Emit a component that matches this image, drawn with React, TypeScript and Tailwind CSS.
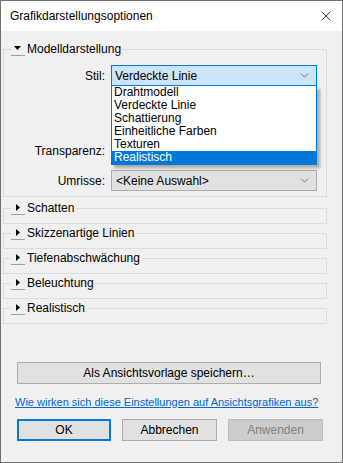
import { X, ChevronDown } from 'lucide-react';

const font = { fontFamily: '"Liberation Sans", Arial, sans-serif' };

const Tri = ({ open }: { open?: boolean }) => (
	<div className="w-[14px] h-[14px] flex items-center justify-center bg-[#f0f0f0] border-b border-[#a0a0a0]">
		{open ? (
			<svg width="8" height="5" viewBox="0 0 8 5">
				<path d="M0 0h7L3.5 4z" fill="#000" />
			</svg>
		) : (
			<svg width="5" height="8" viewBox="0 0 5 8">
				<path d="M0 0v7l4-3.5z" fill="#000" />
			</svg>
		)}
	</div>
);

const Section = ({ title }: { title: string }) => (
	<div className="relative h-[25px]">
		<div className="absolute left-[2px] right-[15px] top-[8px] h-[16px] border border-[#dcdcdc]" />
		<div className="relative flex items-center h-[16px] pl-[10px]">
			<Tri />
			<span className="bg-[#f0f0f0] pl-[2px] pr-[2px] leading-[14px]">{title}</span>
		</div>
	</div>
);

const items = ['Drahtmodell', 'Verdeckte Linie', 'Schattierung', 'Einheitliche Farben', 'Texturen', 'Realistisch'];

const App = () => {
	return (
		<div
			className="w-[343px] h-[463px] bg-[#f0f0f0] border border-[#707070] flex flex-col text-[12px] text-black"
			style={font}
		>
			<div className="h-[30px] bg-white flex items-center justify-between pl-[9px] pr-[8px] shrink-0">
				<span className="text-[12px]">Grafikdarstellungsoptionen</span>
				<X size={16} strokeWidth={1.2} />
			</div>

			<div className="flex flex-col pt-[10px]">
				{/* Modelldarstellung */}
				<div className="relative h-[158px]">
					<div className="absolute left-[2px] right-[15px] top-[8px] bottom-[2px] border border-[#dcdcdc]" />
					<div className="relative flex items-center h-[16px] pl-[10px]">
						<Tri open />
						<span className="bg-[#f0f0f0] pl-[2px] pr-[2px] leading-[14px]">Modelldarstellung</span>
					</div>

					<div className="relative flex items-center mt-[8px]">
						<span className="w-[110px] text-right pr-[6px]">Stil:</span>
						<div className="w-[206px] h-[21px] bg-[#cce4f7] border border-[#0078d7] flex items-center justify-between pl-[3px] pr-[5px]">
							<span>Verdeckte Linie</span>
							<ChevronDown size={13} strokeWidth={1.2} className="text-[#444]" />
						</div>
						<div className="absolute left-[110px] top-[21px] w-[206px] bg-white border border-[#0078d7] border-t-0 shadow-[3px_3px_3px_rgba(0,0,0,0.3)] z-10">
							{items.map((it) => (
								<div
									key={it}
									className={
										it === 'Realistisch'
											? 'h-[13px] leading-[13px] pl-[2px] bg-[#0078d7] text-white'
											: 'h-[13px] leading-[13px] pl-[2px]'
									}
								>
									{it}
								</div>
							))}
						</div>
					</div>

					<div className="flex items-center mt-[56px] h-[18px]">
						<span className="w-[110px] text-right pr-[6px]">Transparenz:</span>
					</div>

					<div className="flex items-center mt-[10px]">
						<span className="w-[110px] text-right pr-[6px]">Umrisse:</span>
						<div className="w-[206px] h-[21px] bg-[#e1e1e1] border border-[#adadad] flex items-center justify-between pl-[4px] pr-[5px]">
							<span>&lt;Keine Auswahl&gt;</span>
							<ChevronDown size={13} strokeWidth={1.2} className="text-[#444]" />
						</div>
					</div>
				</div>

				<div className="flex flex-col pt-[1px]">
					<Section title="Schatten" />
					<Section title="Skizzenartige Linien" />
					<Section title="Tiefenabschwächung" />
					<Section title="Beleuchtung" />
					<Section title="Realistisch" />
				</div>

				<div className="px-[16px] mt-[37px]">
					<button className="w-[304px] h-[22px] bg-[#e1e1e1] border border-[#adadad] text-center">
						Als Ansichtsvorlage speichern…
					</button>
				</div>

				<a className="ml-[14px] mt-[11px] text-[11px] text-[#0066cc] underline leading-[14px] whitespace-nowrap">
					Wie wirken sich diese Einstellungen auf Ansichtsgrafiken aus?
				</a>

				<div className="flex gap-[11px] px-[16px] mt-[10px]">
					<button className="w-[94px] h-[22px] bg-[#e1e1e1] border-2 border-[#0078d7]">OK</button>
					<button className="w-[95px] h-[22px] bg-[#e1e1e1] border border-[#adadad]">Abbrechen</button>
					<button className="w-[95px] h-[22px] bg-[#cccccc] border border-[#bfbfbf] text-[#838383]">
						Anwenden
					</button>
				</div>
			</div>
		</div>
	);
};

export default App;
